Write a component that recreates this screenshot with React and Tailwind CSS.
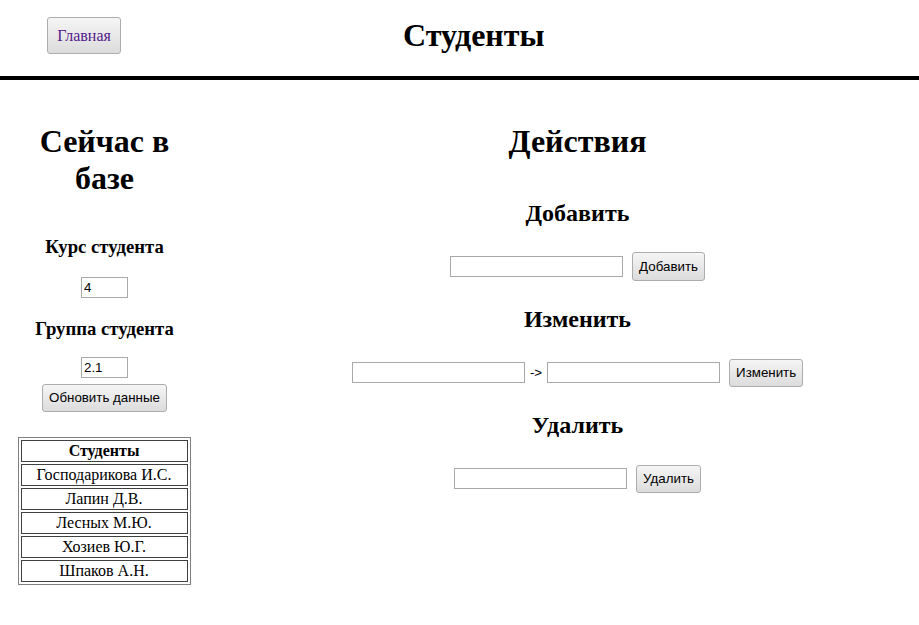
import { useState } from 'react'

const STUDENTS = ['Господарикова И.С.', 'Лапин Д.В.', 'Лесных М.Ю.', 'Хозиев Ю.Г.', 'Шпаков А.Н.']

const btnClass =
  "flex items-center justify-center h-[28px] border border-[#acacac] rounded-[3px] bg-linear-to-b from-[#f5f5f5] to-[#dcdcdc] leading-none"

const sansText = "text-[13.33px] text-black font-['Liberation_Sans',Arial,sans-serif]"

const inputClass =
  "h-[21px] border border-[#a9a9a9] bg-white px-[2px] text-[13.33px] text-black font-['Liberation_Sans',Arial,sans-serif] outline-none"

function Section({ title, children }) {
  return (
    <>
      <h2 className="mt-[24px] text-[24px] leading-[28px] font-bold">{title}</h2>
      <div className="mt-[25px] flex items-center h-[29px]">{children}</div>
    </>
  )
}

export default function App() {
  const [course, setCourse] = useState('4')
  const [group, setGroup] = useState('2.1')

  return (
    <div className="min-h-[625px] bg-white text-black font-['Liberation_Serif','Times_New_Roman',serif]">
      <header className="flex items-center pt-[17px] pb-[22px] pl-[47px]">
        <button className={`${btnClass} w-[74px] h-[37px] font-['Liberation_Serif',serif] text-[16px] text-[#551a8b]`}>
          Главная
        </button>
        <h1 className="ml-[282px] text-[32px] leading-[37px] font-bold">Студенты</h1>
      </header>
      <div className="h-[4px] bg-black" />

      <main className="flex">
        <div className="w-[209px] flex flex-col items-center text-center">
          <h1 className="mt-[43px] w-[170px] text-[32px] leading-[37px] font-bold">Сейчас в базе</h1>
          <h3 className="mt-[39px] text-[18.72px] leading-[22px] font-bold">Курс студента</h3>
          <input
            className={`${inputClass} mt-[19px] w-[47px] h-[20px] text-left`}
            value={course}
            onChange={(e) => setCourse(e.target.value)}
          />
          <h3 className="mt-[20px] text-[18.72px] leading-[22px] font-bold">Группа студента</h3>
          <input
            className={`${inputClass} mt-[17px] w-[47px] h-[20px] text-left`}
            value={group}
            onChange={(e) => setGroup(e.target.value)}
          />
          <button className={`${btnClass} ${sansText} mt-[6px] w-[125px]`}>Обновить данные</button>

          <table className="mt-[25px] -ml-[1px] w-[173px] border border-[#808080] border-separate border-spacing-[2px] text-[16px]">
            <thead>
              <tr>
                <th className="h-[22px] p-0 leading-[20px] border border-[#404040] font-bold">Студенты</th>
              </tr>
            </thead>
            <tbody>
              {STUDENTS.map((s) => (
                <tr key={s}>
                  <td className="h-[22px] p-0 leading-[20px] border border-[#404040] text-center">{s}</td>
                </tr>
              ))}
            </tbody>
          </table>
        </div>

        <div className="flex-1 pl-[27px] flex flex-col items-center text-center">
          <h1 className="mt-[43px] text-[32px] leading-[37px] font-bold">Действия</h1>
          <div className="mt-[15px]" />
          <Section title="Добавить">
            <input className={`${inputClass} w-[173px]`} />
            <button className={`${btnClass} ${sansText} ml-[9px] w-[73px] h-[29px]`}>Добавить</button>
          </Section>
          <Section title="Изменить">
            <input className={`${inputClass} w-[173px]`} />
            <span className={`mx-[5px] ${sansText}`}>-&gt;</span>
            <input className={`${inputClass} w-[173px]`} />
            <button className={`${btnClass} ${sansText} ml-[9px] w-[74px]`}>Изменить</button>
          </Section>
          <Section title="Удалить">
            <input className={`${inputClass} w-[173px]`} />
            <button className={`${btnClass} ${sansText} ml-[9px] w-[65px]`}>Удалить</button>
          </Section>
        </div>
      </main>
    </div>
  )
}
